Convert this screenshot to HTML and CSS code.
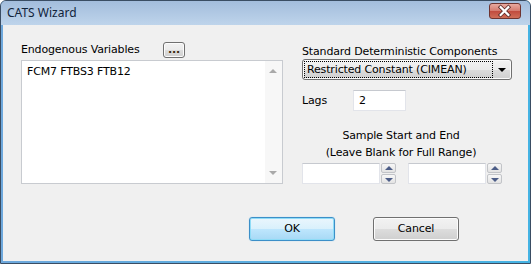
FILE: index.html
```html
<!DOCTYPE html>
<html lang="en">
  <head>
    <meta charset="UTF-8" />
    <title>CATS Wizard</title>
    <link rel="stylesheet" href="styles.css">
  </head>
  <body>
    <div class="window">
      <!-- title bar -->
      <div class="titlebar">
        <span class="title">CATS Wizard</span>
        <div class="close">
          <svg width="32" height="16" viewBox="0 0 32 16">
            <path d="M12 4 L20 12 M20 4 L12 12" stroke="#5a2a28" stroke-width="4" stroke-linecap="square" />
            <path d="M12 4 L20 12 M20 4 L12 12" stroke="#ffffff" stroke-width="2.2" stroke-linecap="square" />
          </svg>
        </div>
      </div>

      <div class="client">
        <div class="main">
          <!-- left column -->
          <div class="left">
            <div class="var-head">
              <span class="var-label">Endogenous Variables</span>
              <div class="btn small">...</div>
            </div>
            <div class="listbox">
              <div class="list-text">FCM7 FTBS3 FTB12</div>
              <div class="vscroll">
                <span class="tri up"></span>
                <span class="tri down"></span>
              </div>
            </div>
          </div>

          <!-- right column -->
          <div class="right">
            <div class="label">Standard Deterministic Components</div>
            <div class="combo">
              <span class="combo-text">Restricted Constant (CIMEAN)</span>
              <span class="combo-arrow"></span>
            </div>
            <div class="lags-row">
              <span class="lags-label">Lags</span>
              <div class="edit lags">2</div>
            </div>
            <div class="sample">
              <div class="sample-title">Sample Start and End<br>(Leave Blank for Full Range)</div>
              <div class="spin-row">
                <div class="spin">
                  <div class="edit spin-edit"></div>
                  <div class="spin-btns">
                    <div class="spin-btn"><span class="tri small-up"></span></div>
                    <div class="spin-btn"><span class="tri small-down"></span></div>
                  </div>
                </div>
                <div class="spin">
                  <div class="edit spin-edit"></div>
                  <div class="spin-btns">
                    <div class="spin-btn"><span class="tri small-up"></span></div>
                    <div class="spin-btn"><span class="tri small-down"></span></div>
                  </div>
                </div>
              </div>
            </div>
          </div>
        </div>

        <div class="footer">
          <div class="btn push default">OK</div>
          <div class="btn push">Cancel</div>
        </div>
      </div>
    </div>
  </body>
</html>
```

FILE: styles.css
```css
body {
  margin: 0;
  padding: 0;
  font-family: "DejaVu Sans", sans-serif;
  font-size: 11px;
  letter-spacing: -0.15px;
  color: #000;
}

.window {
  width: 531px;
  height: 264px;
  box-sizing: border-box;
  border: 1px solid #3a4d63;
  border-radius: 6px 6px 0 0;
  background: linear-gradient(to right, #6ea8dc, #45b3e3);
  display: flex;
  flex-direction: column;
  overflow: hidden;
}

.titlebar {
  height: 24px;
  flex: none;
  display: flex;
  align-items: center;
  justify-content: space-between;
  padding: 0 9px 0 6px;
  background: linear-gradient(#a3bddc, #bed4eb);
}

.title {
  font-family: "Noto Sans", sans-serif;
  font-size: 12px;
  letter-spacing: 0;
  color: #10233a;
  margin-top: -1px;
}

.close {
  width: 32px;
  height: 16px;
  margin-top: -4px;
  border: 1px solid #6e3430;
  border-radius: 3px;
  box-sizing: border-box;
  background: linear-gradient(#e8a99f, #d47a6e 50%, #c04a3d 50%, #cf6e58);
  display: flex;
}

.close svg {
  margin: -1px 0 0 -1px;
}

.client {
  flex: 1;
  margin: 0 2px 2px 2px;
  background: #f0f0f0;
  padding: 17px 0 0 18px;
}

.main {
  display: flex;
  gap: 19px;
}

.left {
  width: 262px;
}

.var-head {
  display: flex;
  height: 15px;
  line-height: 15px;
}

.var-label {
  width: 142px;
}

.btn {
  box-sizing: border-box;
  border: 1px solid #707070;
  border-radius: 3px;
  background: linear-gradient(#f2f2f2, #ebebeb 50%, #dddddd 50%, #cfcfcf);
  box-shadow: inset 0 0 0 1px #fcfcfc;
  text-align: center;
}

.btn.small {
  width: 22px;
  height: 16px;
  line-height: 14px;
  font-weight: bold;
  color: #3a2a10;
}

.listbox {
  margin-top: 3px;
  height: 124px;
  box-sizing: border-box;
  border: 1px solid #c8cbd0;
  background: #fff;
  display: flex;
}

.list-text {
  flex: 1;
  padding: 3px 5px;
  line-height: 15px;
}

.vscroll {
  width: 17px;
  background: #f7f7f7;
  position: relative;
}

.tri {
  position: absolute;
  width: 0;
  height: 0;
  border-left: 4px solid transparent;
  border-right: 4px solid transparent;
}

.tri.up {
  left: 4px;
  top: 8px;
  border-bottom: 4px solid #a9a9a9;
}

.tri.down {
  left: 4px;
  bottom: 8px;
  border-top: 4px solid #a9a9a9;
}

.right {
  width: 210px;
  padding-top: 2px;
}

.label {
  line-height: 15px;
}

.combo {
  height: 21px;
  box-sizing: border-box;
  border: 1px solid #707070;
  border-radius: 3px;
  background: linear-gradient(#f2f2f2, #ebebeb 50%, #dddddd 50%, #cfcfcf);
  box-shadow: inset 0 0 0 1px #fafafa;
  display: flex;
  align-items: center;
  padding: 1px;
  position: relative;
}

.combo-text {
  width: 189px;
  height: 17px;
  box-sizing: border-box;
  border: 1px dotted #000;
  line-height: 15px;
  padding-left: 2px;
}

.combo-arrow {
  position: absolute;
  right: 5px;
  top: 8px;
  border-left: 4px solid transparent;
  border-right: 4px solid transparent;
  border-top: 4px solid #000;
}

.edit {
  box-sizing: border-box;
  background: #fff;
  border: 1px solid #e2e4ea;
  border-top-color: #c6c9cf;
}

.lags-row {
  display: flex;
  align-items: center;
  margin-top: 10px;
}

.lags-label {
  width: 51px;
}

.edit.lags {
  width: 53px;
  height: 21px;
  line-height: 19px;
  padding-left: 5px;
}

.sample {
  width: 198px;
}

.sample-title {
  margin-top: 16px;
  line-height: 17px;
  text-align: center;
}

.spin-row {
  display: flex;
  gap: 12px;
  margin-top: 2px;
}

.spin {
  display: flex;
  gap: 1px;
}

.spin-edit {
  width: 78px;
  height: 21px;
}

.spin-btns {
  display: flex;
  flex-direction: column;
  gap: 1px;
}

.spin-btn {
  width: 15px;
  height: 10px;
  box-sizing: border-box;
  border: 1px solid #c2c4c8;
  border-radius: 2px;
  background: linear-gradient(#f7f7f7, #e3e3e3);
  position: relative;
}

.tri.small-up {
  left: 3px;
  top: 2px;
  border-bottom: 4px solid #4c5d87;
}

.tri.small-down {
  left: 3px;
  top: 3px;
  border-top: 4px solid #4c5d87;
}

.footer {
  display: flex;
  gap: 38px;
  margin-top: 33px;
  padding-left: 228px;
}

.btn.push {
  width: 86px;
  height: 24px;
  line-height: 22px;
  font-size: 11px;
}

.btn.default {
  border-color: #3c8fc8;
  background: linear-gradient(#eaf6fd, #d9f0fc 50%, #bee6fd 50%, #a7d9f5);
  box-shadow: inset 0 0 0 1px #8fdcf7, 0 0 1px #7ec8ee;
}
```
